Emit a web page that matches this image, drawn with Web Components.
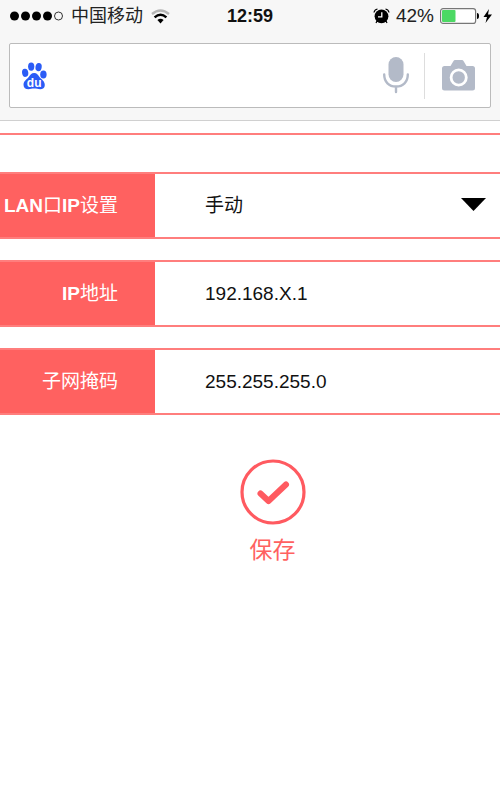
<!DOCTYPE html>
<html lang="zh-CN">
<head>
<meta charset="utf-8">
<meta name="viewport" content="width=device-width, initial-scale=1">
<title>LAN口IP设置</title>
<style>
html {
    --accent: #ff6160;
    --line: #ff7e7d;
    --chrome: #f7f7f7;
    --icon: #b3bac8;
}
body {
    margin: 0;
    background: #fff;
    color: #111;
    font: 19px/24px "Liberation Sans", "Noto Sans CJK SC", sans-serif;
}
</style>
</head>
<body>
<lan-page></lan-page>

<script>
customElements.define('status-bar', class extends HTMLElement {

    constructor() {
        super();
        let shadowRoot = this.attachShadow({ mode: 'open' });
        shadowRoot.innerHTML = `
        <style>
        :host {
            display: grid;
            grid-template-columns: 1fr auto 1fr;
            align-items: center;
            height: 32px;
            padding: 0 8px;
            font-size: 18px;
            color: #222;
        }
        div {
            display: flex;
            align-items: center;
            gap: 8px;
        }
        .left {
            padding-left: 2px;
        }
        .right {
            justify-content: flex-end;
            gap: 6px;
            font-size: 19px;
        }
        time {
            font-weight: bold;
            color: #111;
        }
        svg {
            display: block;
            flex: none;
        }
        </style>
        <div class="left">
            <svg width="53" height="10" viewBox="0 0 53 10">
                <circle cx="4.5" cy="5" r="4.5"/>
                <circle cx="15.5" cy="5" r="4.5"/>
                <circle cx="26.5" cy="5" r="4.5"/>
                <circle cx="37.5" cy="5" r="4.5"/>
                <circle cx="48.5" cy="5" r="4" fill="none" stroke="#333"/>
            </svg>
            <span>中国移动</span>
            <svg width="19" height="15" viewBox="0 0 19 15" fill="none" stroke-width="2.4">
                <path d="M1 5 Q9.5 -2 18 5" stroke="#b5b5b5"/>
                <path d="M3.6 8.4 Q9.5 3 15.4 8.4" stroke="#000"/>
                <path d="M6.4 11 Q9.5 8.4 12.6 11 L9.5 14.4 Z" fill="#000" stroke="none"/>
            </svg>
        </div>
        <time>12:59</time>
        <div class="right">
            <svg width="17" height="16" viewBox="0 0 17 16">
                <circle cx="8.5" cy="8.3" r="6.9"/>
                <path d="M1 4.5 Q1.5 1.5 4.5 1 M16 4.5 Q15.5 1.5 12.5 1" fill="none" stroke="#000" stroke-width="1.2"/>
                <path d="M4 13 L3 15 M13 13 L14 15" stroke="#000" stroke-width="1.2"/>
                <path d="M8.8 4.2 V8.8 H5" fill="none" stroke="#fff" stroke-width="1.3"/>
            </svg>
            <span>42%</span>
            <svg width="52" height="16" viewBox="0 0 52 16">
                <rect x=".6" y=".6" width="35" height="14.8" rx="2.5" fill="#fff" stroke="#777" stroke-width="1.2"/>
                <rect x="2" y="2" width="13.5" height="12" rx="1" fill="#4cd964"/>
                <path d="M37 5 Q39 5 39 8 Q39 11 37 11 Z"/>
                <path d="M49 1 L43.5 9 H47 L45.5 15 L52 6.6 H48 Z"/>
            </svg>
        </div>
        `;
    }

});

customElements.define('search-bar', class extends HTMLElement {

    constructor() {
        super();
        let shadowRoot = this.attachShadow({ mode: 'open' });
        shadowRoot.innerHTML = `
        <style>
        :host {
            display: block;
            padding: 11px 9px 12px;
        }
        form {
            display: flex;
            align-items: center;
            box-sizing: border-box;
            height: 65px;
            padding: 0 15px 0 12px;
            background: #fff;
            border: 1px solid #bbb;
            border-radius: 2px;
        }
        input {
            flex: 1;
            min-width: 0;
            height: 44px;
            border: 0;
            padding: 0 8px;
            outline: 0;
            background: none;
            font: inherit;
        }
        button {
            display: flex;
            flex: none;
            padding: 0;
            border: 0;
            background: none;
        }
        .voice {
            padding-right: 15px;
            border-right: 1px solid #ddd;
            height: 46px;
            align-items: center;
        }
        .photo {
            padding-left: 17px;
        }
        svg {
            display: block;
            flex: none;
        }
        .voice path {
            fill: none;
            stroke: var(--icon);
        }
        .voice rect, .photo path, .photo circle {
            fill: var(--icon);
        }
        </style>
        <form>
            <svg width="25" height="28" viewBox="0 0 25 28" fill="#2b5cf6">
                <ellipse cx="3.2" cy="10.8" rx="3.1" ry="4.1" transform="rotate(-8 3 11)"/>
                <ellipse cx="9.2" cy="4.6" rx="3.1" ry="4.2"/>
                <ellipse cx="16.6" cy="5" rx="3.1" ry="4.1" transform="rotate(10 16 5)"/>
                <ellipse cx="21.4" cy="12.5" rx="3.2" ry="4"/>
                <path d="M12.2 11 C15 11 16 13 17.5 15 C19.5 17.5 22.8 19 22.8 23 C22.8 26 20.8 27.2 18.2 27.2 C16 27.2 14.5 26.5 12.2 26.5 C10 26.5 8.5 27.2 6.5 27.2 C3.5 27.2 1.5 25.8 1.5 22.7 C1.5 19 4.7 17.5 6.7 15 C8.3 13 9.3 11 12.2 11 Z"/>
                <text x="12.2" y="25" text-anchor="middle" font-size="12" font-weight="bold" font-family="Liberation Sans, sans-serif" fill="#fff">du</text>
            </svg>
            <input type="text" aria-label="搜索">
            <button class="voice" type="button" aria-label="语音">
                <svg width="26" height="37" viewBox="0 0 26 37">
                    <rect x="5.5" y="0" width="15" height="25" rx="7.5"/>
                    <path d="M1.2 17.5 C1.2 25 6 29.500 13 29.500 C20 29.500 24.800 25 24.800 17.500 M13 29.500 V35" stroke-width="2.4" stroke-linecap="round"/>
                </svg>
            </button>
            <button class="photo" type="button" aria-label="拍照">
                <svg width="33" height="31" viewBox="0 0 33 31">
                    <path d="M2.5 6 H8.500 L11.500 1 Q12 0 13 0 H20 Q21 0 21.500 1 L24.500 6 H30.500 Q33 6 33 8.500 V28 Q33 30.500 30.500 30.500 H2.500 Q0 30.500 0 28 V8.500 Q0 6 2.500 6 Z"/>
                    <circle cx="16.7" cy="17.5" r="7.6" stroke="#fff" stroke-width="2.8"/>
                </svg>
            </button>
        </form>
        `;
    }

});

// One bordered row: coloured label cell on the left, form control on the right.
customElements.define('setting-row', class extends HTMLElement {

    constructor() {
        super();
        let shadowRoot = this.attachShadow({ mode: 'open' });
        shadowRoot.innerHTML = `
        <style>
        :host {
            display: grid;
            grid-template-columns: 155px 1fr;
            box-sizing: border-box;
            height: 67px;
            border: solid var(--line);
            border-width: 2px 0;
        }
        .label {
            display: flex;
            align-items: center;
            justify-content: flex-end;
            padding-right: 37px;
            background: var(--accent);
            color: #fff;
            white-space: nowrap;
        }
        .control {
            display: grid;
            position: relative;
        }
        ::slotted(select), ::slotted(input) {
            appearance: none;
            width: 100%;
            min-width: 0;
            box-sizing: border-box;
            margin: 0;
            padding: 0 50px;
            border: 0;
            border-radius: 0;
            outline: 0;
            background: none;
            color: inherit;
            font: inherit;
        }
        svg {
            display: none;
            position: absolute;
            top: 24px;
            right: 14px;
            pointer-events: none;
        }
        :host([menu]) svg {
            display: block;
        }
        </style>
        <div class="label"><slot name="label"></slot></div>
        <div class="control">
            <slot></slot>
            <svg width="25" height="13" viewBox="0 0 25 13"><path d="M0 0 H25 L12.5 13 Z"/></svg>
        </div>
        `;
    }

});

customElements.define('save-button', class extends HTMLElement {

    constructor() {
        super();
        let shadowRoot = this.attachShadow({ mode: 'open' });
        shadowRoot.innerHTML = `
        <style>
        :host {
            display: block;
        }
        button {
            display: flex;
            flex-direction: column;
            align-items: center;
            gap: 11px;
            padding: 0;
            border: 0;
            background: none;
            color: var(--accent);
            font: inherit;
            font-size: 23px;
            line-height: 28px;
        }
        </style>
        <button type="button">
            <svg width="66" height="66" viewBox="0 0 66 66" fill="none" stroke="#ff5a60">
                <circle cx="33" cy="33" r="31" stroke-width="3.2"/>
                <path d="M20.5 34.5 L28.5 42 L46 25.5" stroke-width="6" stroke-linecap="round" stroke-linejoin="round"/>
            </svg>
            <slot></slot>
        </button>
        `;
    }

});

customElements.define('lan-page', class extends HTMLElement {

    constructor() {
        super();
        let shadowRoot = this.attachShadow({ mode: 'open' });
        shadowRoot.innerHTML = `
        <style>
        :host {
            display: block;
        }
        header {
            background: var(--chrome);
            border-bottom: 1px solid #d0d0d0;
        }
        main {
            display: flex;
            flex-direction: column;
            gap: 21px;
            padding-top: 12px;
        }
        hr {
            width: 100%;
            margin: 0 0 16px;
            border: 0;
            border-top: 2px solid var(--line);
        }
        save-button {
            align-self: center;
            margin: 23px 0 0 45px;
        }
        </style>
        <header>
            <status-bar></status-bar>
            <search-bar></search-bar>
        </header>
        <main>
            <hr>
            <setting-row menu>
                <label slot="label" for="mode"><b>LAN</b>口<b>IP</b>设置</label>
                <select id="mode">
                    <option>手动</option>
                </select>
            </setting-row>
            <setting-row>
                <label slot="label" for="ip"><b>IP</b>地址</label>
                <input id="ip" type="text" value="192.168.X.1">
            </setting-row>
            <setting-row>
                <label slot="label" for="mask">子网掩码</label>
                <input id="mask" type="text" value="255.255.255.0">
            </setting-row>
            <save-button>保存</save-button>
        </main>
        `;
    }

});
</script>
</body>
</html>
